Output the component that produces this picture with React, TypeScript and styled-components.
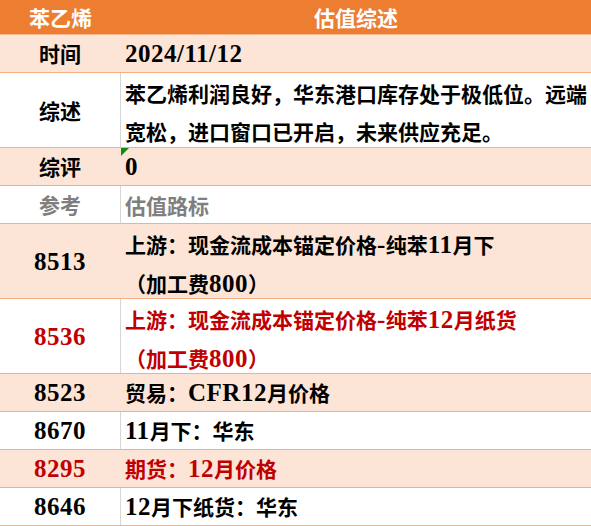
import React from "react";
import styled, { createGlobalStyle } from "styled-components";

const GlobalStyle = createGlobalStyle`
  body {
    margin: 0;
    background: #ffffff;
  }
`;

const Sheet = styled.div`
  width: 591px;
  font-family: "Liberation Serif", "Noto Sans CJK SC", serif;
  font-weight: 700;
  font-size: 21px;
  color: #000000;
`;

const HeaderRow = styled.div`
  display: grid;
  grid-template-columns: 121px 1fr;
  height: 35px;
  background: #ed7d31;
  color: #ffffff;
  border-bottom: 1px solid #f6b98f;
  box-sizing: border-box;
`;

const HeaderCell = styled.div`
  display: flex;
  align-items: center;
  justify-content: center;
  font-family: "Noto Sans CJK SC", sans-serif;
  font-size: 21px;
  font-weight: 700;
`;

const Row = styled.div<{ $peach: boolean; $tall?: boolean }>`
  display: grid;
  grid-template-columns: 121px 1fr;
  height: ${({ $tall }) => ($tall ? "75px" : "38px")};
  box-sizing: border-box;
  background: ${({ $peach }) => ($peach ? "#fce4d6" : "#ffffff")};
  border-bottom: 1px solid #f4b084;
`;

const Label = styled.div<{ $peach: boolean; $tone: string }>`
  display: flex;
  align-items: center;
  justify-content: center;
  border-right: 1px solid ${({ $peach }) => ($peach ? "transparent" : "#d6d6d6")};
  color: ${({ $tone }) => $tone};
  font-family: "Noto Sans CJK SC", sans-serif;
  line-height: 1;
`;

const Content = styled.div<{ $tone: string; $tall?: boolean }>`
  position: relative;
  display: flex;
  align-items: ${({ $tall }) => ($tall ? "flex-start" : "center")};
  padding: ${({ $tall }) => ($tall ? "1px 0 0 4px" : "0 0 0 4px")};
  color: ${({ $tone }) => $tone};
  font-family: "Noto Sans CJK SC", sans-serif;
  line-height: 38px;
  white-space: nowrap;
  overflow: hidden;
`;

const Lines = styled.div`
  display: flex;
  flex-direction: column;
`;

const Lat = styled.span`
  font-family: "Liberation Serif", serif;
  font-size: 25px;
  letter-spacing: 0.5px;
  font-weight: 700;
`;

const Flag = styled.span`
  position: absolute;
  top: 0;
  left: 0;
  width: 0;
  height: 0;
  border-top: 8px solid #128a12;
  border-right: 8px solid transparent;
`;

const BLACK = "#000000";
const RED = "#c00000";
const GREY = "#7f7f7f";

type RowData = {
  label: React.ReactNode;
  lines: React.ReactNode[];
  peach: boolean;
  tone: string;
  flag?: boolean;
};

const rows: RowData[] = [
  { label: "时间", lines: [<Lat>2024/11/12</Lat>], peach: true, tone: BLACK },
  {
    label: "综述",
    lines: [
      "苯乙烯利润良好，华东港口库存处于极低位。远端",
      "宽松，进口窗口已开启，未来供应充足。",
    ],
    peach: false,
    tone: BLACK,
  },
  { label: "综评", lines: [<Lat>0</Lat>], peach: true, tone: BLACK, flag: true },
  { label: "参考", lines: ["估值路标"], peach: false, tone: GREY },
  {
    label: <Lat>8513</Lat>,
    lines: [
      <>
        上游：现金流成本锚定价格<Lat>-</Lat>纯苯<Lat>11</Lat>月下
      </>,
      <>
        （加工费<Lat>800</Lat>）
      </>,
    ],
    peach: true,
    tone: BLACK,
  },
  {
    label: <Lat>8536</Lat>,
    lines: [
      <>
        上游：现金流成本锚定价格<Lat>-</Lat>纯苯<Lat>12</Lat>月纸货
      </>,
      <>
        （加工费<Lat>800</Lat>）
      </>,
    ],
    peach: false,
    tone: RED,
  },
  {
    label: <Lat>8523</Lat>,
    lines: [
      <>
        贸易：<Lat>CFR12</Lat>月价格
      </>,
    ],
    peach: true,
    tone: BLACK,
  },
  {
    label: <Lat>8670</Lat>,
    lines: [
      <>
        <Lat>11</Lat>月下：华东
      </>,
    ],
    peach: false,
    tone: BLACK,
  },
  {
    label: <Lat>8295</Lat>,
    lines: [
      <>
        期货：<Lat>12</Lat>月价格
      </>,
    ],
    peach: true,
    tone: RED,
  },
  {
    label: <Lat>8646</Lat>,
    lines: [
      <>
        <Lat>12</Lat>月下纸货：华东
      </>,
    ],
    peach: false,
    tone: BLACK,
  },
];

export default function App() {
  return (
    <>
      <GlobalStyle />
      <Sheet>
        <HeaderRow>
          <HeaderCell>苯乙烯</HeaderCell>
          <HeaderCell>估值综述</HeaderCell>
        </HeaderRow>
        {rows.map((row, i) => {
          const tall = row.lines.length > 1;
          return (
            <Row key={i} $peach={row.peach} $tall={tall}>
              <Label $peach={row.peach} $tone={row.tone}>
                {row.label}
              </Label>
              <Content $tone={row.tone} $tall={tall}>
                {row.flag && <Flag />}
                <Lines>
                  {row.lines.map((line, j) => (
                    <div key={j}>{line}</div>
                  ))}
                </Lines>
              </Content>
            </Row>
          );
        })}
      </Sheet>
    </>
  );
}
